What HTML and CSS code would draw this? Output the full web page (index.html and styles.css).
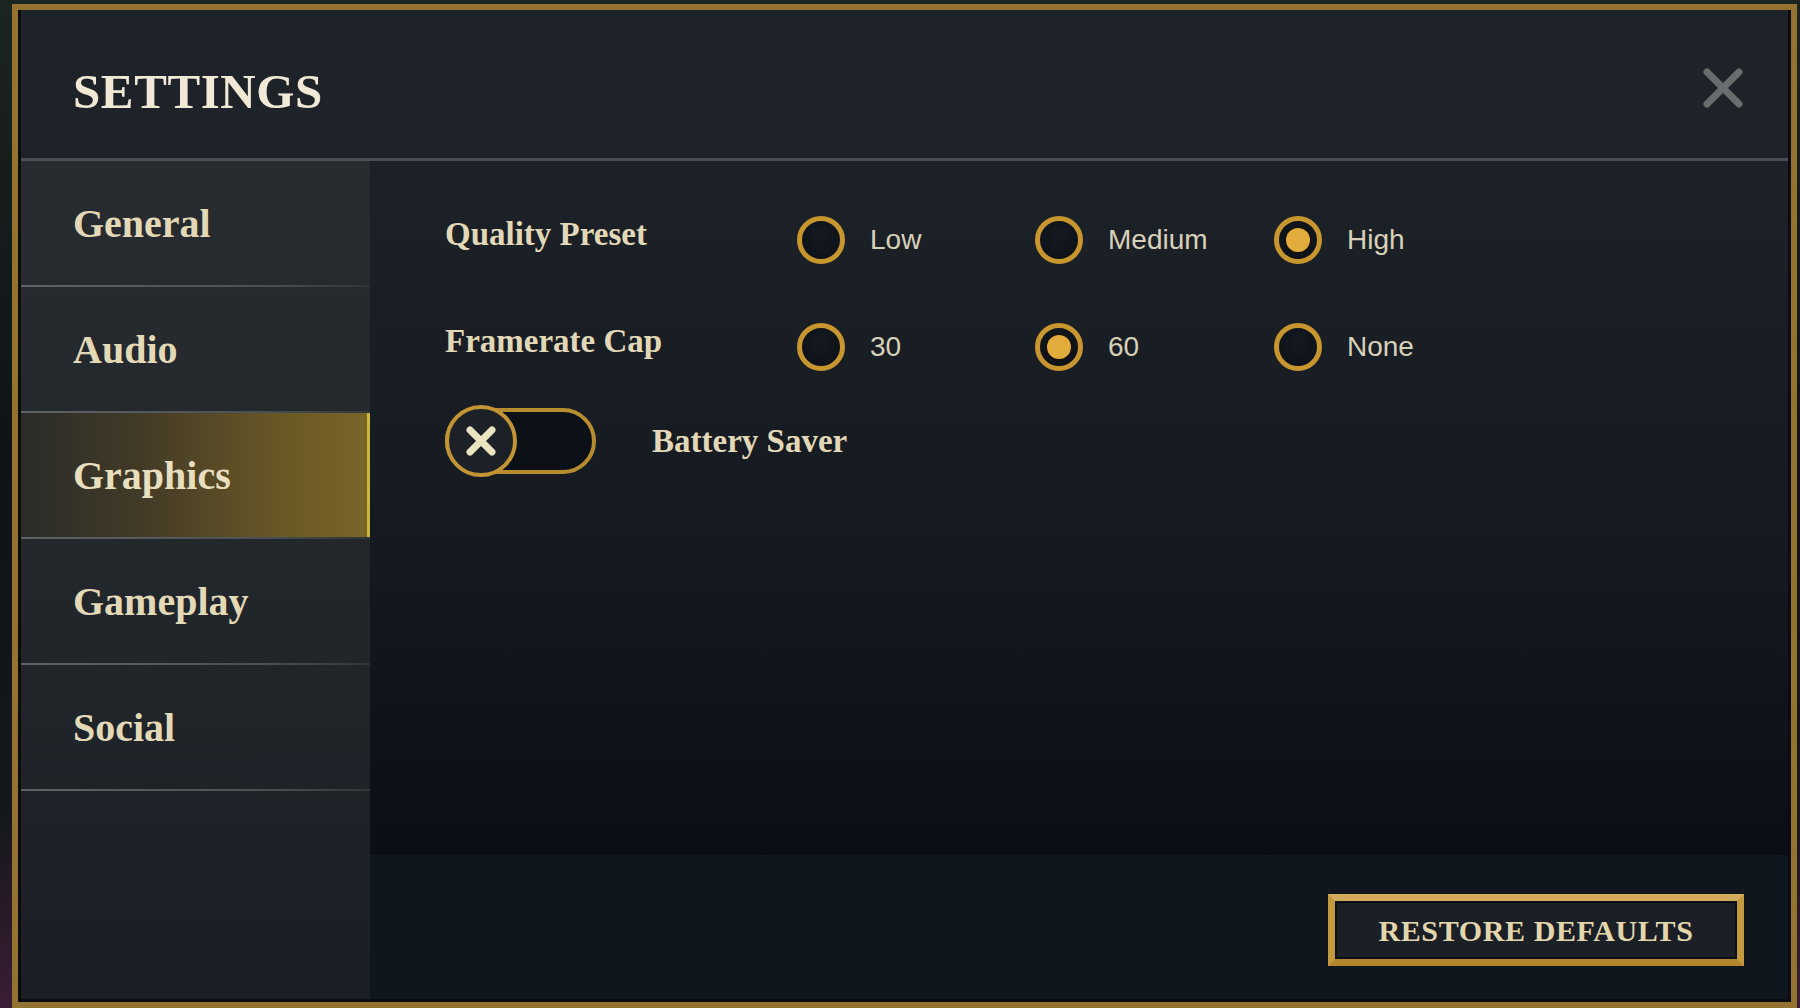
FILE: index.html
```html
<!DOCTYPE html>
<html lang="en">

<head>
    <meta charset="UTF-8">
    <meta name="viewport" content="width=device-width, initial-scale=1.0">
    <title>Settings</title>
    <link rel="stylesheet" href="styles.css">
</head>

<body>
    <div class="panel">
        <div class="panel-head">
            <h1 class="title">SETTINGS</h1>
            <button class="close" aria-label="Close">
                <svg width="42" height="42" viewBox="0 0 42 42">
                    <path d="M5 5 L37 37 M37 5 L5 37" stroke="#6a6c6d" stroke-width="7" stroke-linecap="round" fill="none" />
                </svg>
            </button>
        </div>

        <div class="panel-body">
            <div class="sidebar">
                <div class="tab">General</div>
                <div class="tab">Audio</div>
                <div class="tab active">Graphics</div>
                <div class="tab">Gameplay</div>
                <div class="tab">Social</div>
            </div>

            <div class="content">
                <div class="options">
                    <div class="option-row">
                        <div class="label">Quality Preset</div>
                        <div class="choice"><span class="radio"></span><span>Low</span></div>
                        <div class="choice"><span class="radio"></span><span>Medium</span></div>
                        <div class="choice"><span class="radio checked"></span><span>High</span></div>
                    </div>
                    <div class="option-row">
                        <div class="label">Framerate Cap</div>
                        <div class="choice"><span class="radio"></span><span>30</span></div>
                        <div class="choice"><span class="radio checked"></span><span>60</span></div>
                        <div class="choice"><span class="radio"></span><span>None</span></div>
                    </div>
                    <div class="toggle-row">
                        <div class="toggle">
                            <span class="knob">
                                <svg width="36" height="36" viewBox="0 0 36 36">
                                    <path d="M7 7 L29 29 M29 7 L7 29" stroke="#ebe4c0" stroke-width="7" stroke-linecap="round" fill="none" />
                                </svg>
                            </span>
                        </div>
                        <div class="label">Battery Saver</div>
                    </div>
                </div>
                <div class="footer">
                    <button class="restore">RESTORE DEFAULTS</button>
                </div>
            </div>
        </div>
    </div>
</body>

</html>
```

FILE: styles.css
```css
html,
body {
    margin: 0;
    height: 1008px;
    overflow: hidden;
}

body {
    font-family: 'Liberation Serif', serif;
    background: linear-gradient(180deg, #1b2521 0%, #0f1315 45%, #14181a 80%, #3a1d35 100%);
}

.panel {
    box-sizing: border-box;
    margin: 4px 3px 0 12px;
    height: 1004px;
    border: 6px solid #94722f;
    padding: 0 3px 3px 3px;
    background: #0a0c0f;
    display: flex;
    flex-direction: column;
}

.panel-head {
    height: 151px;
    flex: none;
    display: flex;
    align-items: center;
    justify-content: space-between;
    padding: 8px 44px 0 52px;
    box-sizing: border-box;
    background: #1e2229;
    border-bottom: 3px solid #4a4f55;
}

.title {
    margin: 0;
    padding-top: 6px;
    font-size: 49px;
    font-weight: bold;
    letter-spacing: 0.6px;
    color: #f1e9d6;
}

.close {
    background: none;
    border: 0;
    padding: 0;
    display: flex;
}

.panel-body {
    flex: 1;
    display: flex;
    min-height: 0;
}

.sidebar {
    width: 349px;
    flex: none;
    background: linear-gradient(180deg, #282c30 0%, #22272c 50%, #1a1f25 100%);
}

.tab {
    height: 124px;
    display: flex;
    align-items: center;
    padding-left: 52px;
    font-size: 40px;
    font-weight: bold;
    color: #e4d9b6;
    border-bottom: 2px solid transparent;
    border-image: linear-gradient(90deg, #5e6368, #4b5055 70%, #30353a) 1;
}

.tab.active {
    background: linear-gradient(90deg, #2a2b29 0%, #433b27 35%, #6a5826 75%, #7a6629 100%);
    box-shadow: inset -3px 0 0 #cbb73a;
    color: #e8dfbf;
}

.content {
    flex: 1;
    display: flex;
    flex-direction: column;
}

.options {
    flex: 1;
    padding: 32px 0 0 75px;
    background: linear-gradient(180deg, #1d2128 0%, #161b22 50%, #0b0f15 100%);
    display: flex;
    flex-direction: column;
    gap: 13px;
}

.option-row {
    height: 94px;
    display: grid;
    grid-template-columns: 352px 238px 239px 238px;
    align-items: center;
}

.label {
    font-size: 33px;
    font-weight: bold;
    color: #e2d8b7;
    padding-bottom: 12px;
}

.choice {
    display: flex;
    align-items: center;
    gap: 25px;
    font-family: 'Liberation Sans', sans-serif;
    font-size: 28px;
    color: #d8d1b9;
}

.radio {
    box-sizing: border-box;
    width: 48px;
    height: 48px;
    border-radius: 50%;
    border: 5px solid #c8962f;
    background: radial-gradient(circle at 50% 40%, #151a21, #0b0f15);
    display: flex;
    align-items: center;
    justify-content: center;
}

.radio.checked::after {
    content: "";
    width: 24px;
    height: 24px;
    border-radius: 50%;
    background: #e2ac3c;
    box-shadow: 0 0 0 2px #15120c;
}

.toggle-row {
    height: 72px;
    margin-top: -2px;
    display: flex;
    align-items: center;
    gap: 56px;
}

.toggle-row .label {
    padding-bottom: 0;
}

.toggle {
    position: relative;
    box-sizing: border-box;
    width: 151px;
    height: 66px;
    border: 4px solid #b68c2e;
    border-radius: 33px;
    background: #0c1117;
}

.knob {
    position: absolute;
    left: -4px;
    top: -7px;
    box-sizing: border-box;
    width: 72px;
    height: 72px;
    border-radius: 50%;
    border: 4px solid #c39434;
    background: #1c2128;
    display: flex;
    align-items: center;
    justify-content: center;
}

.footer {
    height: 144px;
    flex: none;
    background: #10161d;
    display: flex;
    justify-content: flex-end;
    padding: 39px 44px 0 0;
    box-sizing: border-box;
}

.restore {
    box-sizing: border-box;
    width: 416px;
    height: 72px;
    border: 7px solid #c59a3e;
    border-top-color: #d3ab5a;
    border-bottom-color: #b2862c;
    background: #1b1f26;
    box-shadow: inset 0 0 0 2px #0d1015;
    font-family: 'Liberation Serif', serif;
    font-weight: bold;
    font-size: 30px;
    letter-spacing: 0.6px;
    color: #e3d6ad;
    padding: 2px 0 0;
}
```
